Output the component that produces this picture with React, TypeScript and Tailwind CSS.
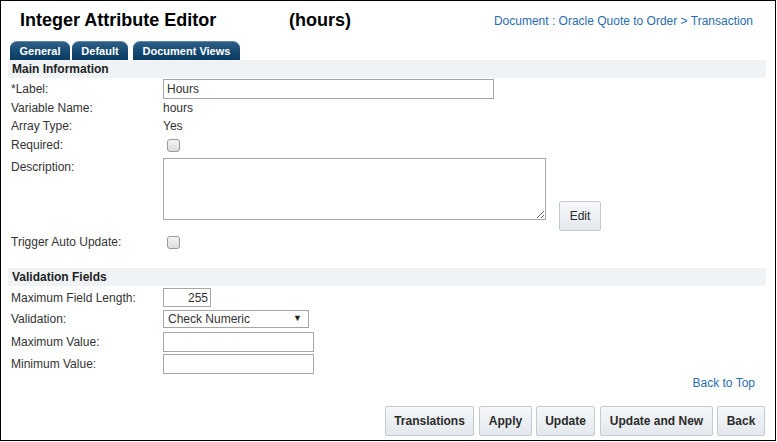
import React from "react";

const font = { fontFamily: '"Liberation Sans", Arial, sans-serif' };

function Checkbox() {
  return (
    <span className="ml-[4px] inline-block h-[13px] w-[13px] rounded-[3px] border border-[#9a9a9a] bg-gradient-to-b from-[#f4f4f4] to-[#dcdcdc]" />
  );
}

function Label({ children }: { children: React.ReactNode }) {
  return <div className="w-[152px] shrink-0 text-[12px] text-[#333]">{children}</div>;
}

function Btn({ children, w, ml }: { children: React.ReactNode; w: string; ml: string }) {
  return (
    <div
      className={`${w} ${ml} flex h-[30px] shrink-0 items-center justify-center rounded-[2px] border border-[#c3cad2] bg-gradient-to-b from-[#f6f8fa] to-[#e3e8ed] text-[12px] font-bold text-[#2b2b2b]`}
    >
      {children}
    </div>
  );
}

function Tab({ children, w, ml }: { children: React.ReactNode; w: string; ml: string }) {
  return (
    <div
      className={`${w} ${ml} flex h-[19px] items-center justify-center rounded-t-[7px] border-t border-[#5d86aa] bg-gradient-to-b from-[#2f6088] via-[#164a72] to-[#0b3a5f] text-[11px] font-bold text-white`}
    >
      {children}
    </div>
  );
}

export default function App() {
  return (
    <div style={font} className="h-[441px] w-[776px] border border-black bg-white text-[#333]">
      {/* Header */}
      <div className="flex h-[39px] items-center pl-[19px] pr-[22px]">
        <span className="w-[269px] text-[18px] font-bold text-black">Integer Attribute Editor</span>
        <span className="text-[18px] font-bold text-black">(hours)</span>
        <span className="ml-auto text-[12px] text-[#2a6cad]">Document : Oracle Quote to Order &gt; Transaction</span>
      </div>

      {/* Tabs */}
      <div className="mt-[1px] flex pl-[9px]">
        <Tab w="w-[60px]" ml="ml-0">General</Tab>
        <Tab w="w-[56px]" ml="ml-[2px]">Default</Tab>
        <Tab w="w-[107px]" ml="ml-[5px]">Document Views</Tab>
      </div>

      {/* Main Information */}
      <div className="ml-[7px] mr-[9px] flex h-[18px] items-center bg-[#f0f3f6] pl-[4px] text-[12px] font-bold text-[#222]">
        Main Information
      </div>

      <div className="pl-[10px]">
        <div className="mt-[1px] flex h-[20px] items-center">
          <Label>*Label:</Label>
          <div className="flex h-[20px] w-[331px] items-center border border-[#a6a6a6] pl-[3px] text-[12px] text-[#333]">
            Hours
          </div>
        </div>
        <div className="flex h-[18px] items-center">
          <Label>Variable Name:</Label>
          <span className="text-[12px]">hours</span>
        </div>
        <div className="flex h-[18px] items-center">
          <Label>Array Type:</Label>
          <span className="text-[12px]">Yes</span>
        </div>
        <div className="flex h-[20px] items-center">
          <Label>Required:</Label>
          <Checkbox />
        </div>
        <div className="mt-[3px] flex items-start">
          <div className="w-[152px] shrink-0 pt-[2px] text-[12px] leading-[14px] text-[#333]">Description:</div>
          <textarea className="h-[62px] w-[383px] resize border border-[#a6a6a6] outline-none" />
          <Btn w="w-[42px]" ml="ml-[13px] mt-[43px]">
            <span className="font-normal">Edit</span>
          </Btn>
        </div>
        <div className="mt-[1px] flex h-[20px] items-center">
          <Label>Trigger Auto Update:</Label>
          <Checkbox />
        </div>
      </div>

      {/* Validation Fields */}
      <div className="ml-[7px] mr-[9px] mt-[16px] flex h-[18px] items-center bg-[#f0f3f6] pl-[4px] text-[12px] font-bold text-[#222]">
        Validation Fields
      </div>

      <div className="pl-[10px]">
        <div className="mt-[2px] flex h-[19px] items-center">
          <Label>Maximum Field Length:</Label>
          <div className="flex h-[19px] w-[48px] items-center justify-end border border-[#a6a6a6] pr-[2px] text-[12px]">
            255
          </div>
        </div>
        <div className="mt-[3px] flex h-[18px] items-center">
          <Label>Validation:</Label>
          <div className="flex h-[18px] w-[146px] items-center border border-[#a6a6a6] pl-[4px] pr-[6px] text-[12px]">
            <span>Check Numeric</span>
            <span className="ml-auto text-[9px] text-[#222]">▼</span>
          </div>
        </div>
        <div className="mt-[4px] flex h-[20px] items-center">
          <Label>Maximum Value:</Label>
          <div className="h-[20px] w-[151px] border border-[#a6a6a6]" />
        </div>
        <div className="mt-[2px] flex h-[20px] items-center">
          <Label>Minimum Value:</Label>
          <div className="h-[20px] w-[151px] border border-[#a6a6a6]" />
        </div>
      </div>

      <div className="flex h-[18px] items-center justify-end pr-[20px] text-[12px] text-[#2a6cad]">Back to Top</div>

      <div className="mt-[14px] flex justify-end pr-[10px]">
        <Btn w="w-[89px]" ml="ml-0">Translations</Btn>
        <Btn w="w-[53px]" ml="ml-[5px]">Apply</Btn>
        <Btn w="w-[59px]" ml="ml-[4px]">Update</Btn>
        <Btn w="w-[113px]" ml="ml-[5px]">Update and New</Btn>
        <Btn w="w-[48px]" ml="ml-[4px]">Back</Btn>
      </div>
    </div>
  );
}
